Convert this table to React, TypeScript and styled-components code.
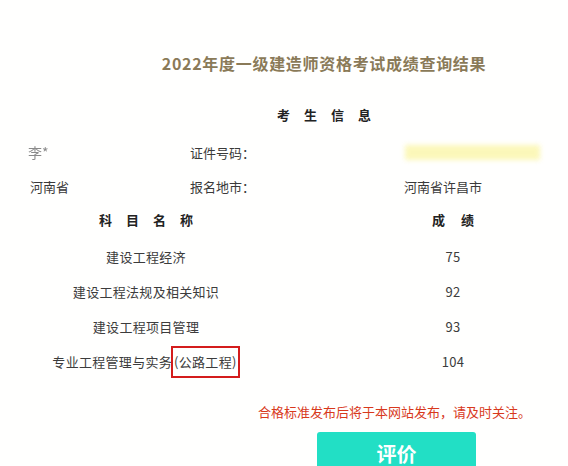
import React from "react";
import styled, { createGlobalStyle } from "styled-components";

const Global = createGlobalStyle`
  html, body { margin: 0; padding: 0; background: #ffffff; }
  body {
    font-family: "Noto Sans CJK SC", "Noto Sans", "Liberation Sans", sans-serif;
    font-size: 13px;
    color: #3a3a3a;
  }
`;

const Page = styled.div`
  width: 568px;
  height: 466px;
  overflow: hidden;
  padding-top: 53px;
  box-sizing: border-box;
  background: #fffffe;
`;

const Heading = styled.div`
  padding-left: 80px;
  display: flex;
  justify-content: center;
`;

const Title = styled.h1`
  margin: 0;
  font-size: 16px;
  line-height: 20px;
  font-weight: 700;
  color: #8a7a58;
  letter-spacing: 0.7px;
  white-space: nowrap;
`;

const SectionLabel = styled.div<{ $top?: number }>`
  margin-top: ${(p) => p.$top ?? 0}px;
  padding-left: 80px;
  display: flex;
  justify-content: center;
  font-weight: 700;
  line-height: 20px;
  color: #222;
  white-space: nowrap;
`;

const Spaced = styled.span<{ $gap: number }>`
  letter-spacing: ${(p) => p.$gap}px;
  margin-right: -${(p) => p.$gap}px;
  white-space: nowrap;
`;

const InfoGrid = styled.div`
  margin-top: 10px;
  padding-left: 30px;
  display: grid;
  grid-template-columns: 160px 214px 1fr;
  grid-auto-rows: 34px;
  align-items: center;
`;

const Masked = styled.span`
  color: #8a8a8a;
  font-size: 14px;
  filter: blur(0.7px);
  margin-left: -2px;
`;

const YellowMask = styled.span`
  display: block;
  width: 135px;
  height: 15px;
  margin-left: 1px;
  background: #fbf6a8;
  filter: blur(2.5px);
  opacity: 0.8;
`;

const ScoreGrid = styled.div`
  display: grid;
  grid-template-columns: 292px 214px;
  column-gap: 54px;
  justify-items: center;
  align-items: center;
`;

const HeadCell = styled.div`
  height: 34px;
  line-height: 34px;
  font-weight: 700;
  color: #222;
  margin-bottom: 2px;
  white-space: nowrap;
`;

const Cell = styled.div`
  height: 35px;
  line-height: 35px;
  color: #3c3c3c;
  white-space: nowrap;
  letter-spacing: 0.3px;
`;

const Highlight = styled.span`
  display: inline-block;
  border: 2px solid #d41c1c;
  padding: 7px 1px;
  margin-left: -1px;
  line-height: 14px;
  vertical-align: middle;
  position: relative;
  top: -1px;
`;

const Note = styled.div`
  margin-top: 23px;
  padding-left: 258px;
  color: #d8391c;
  font-size: 13px;
  line-height: 20px;
  white-space: nowrap;
`;

const ButtonRow = styled.div`
  margin-top: 10px;
  padding-left: 317px;
`;

const RateButton = styled.button`
  width: 159px;
  height: 44px;
  border: none;
  border-radius: 3px;
  background: #22dfc5;
  color: #ffffff;
  font-family: "Noto Sans CJK SC", sans-serif;
  font-size: 20px;
  font-weight: 700;
  padding: 0 0 2px;
  cursor: pointer;
`;

const scores: { name: React.ReactNode; score: string }[] = [
  { name: "建设工程经济", score: "75" },
  { name: "建设工程法规及相关知识", score: "92" },
  { name: "建设工程项目管理", score: "93" },
  {
    name: (
      <>
        专业工程管理与实务<Highlight>(公路工程)</Highlight>
      </>
    ),
    score: "104",
  },
];

export default function App() {
  return (
    <>
      <Global />
      <Page>
        <Heading>
          <Title>2022年度一级建造师资格考试成绩查询结果</Title>
        </Heading>
        <SectionLabel $top={32}>
          <Spaced $gap={14}>考生信息</Spaced>
        </SectionLabel>
        <InfoGrid>
          <Masked>李*</Masked>
          <span>证件号码：</span>
          <YellowMask />
          <span>河南省</span>
          <span>报名地市：</span>
          <span>河南省许昌市</span>
        </InfoGrid>
        <ScoreGrid>
          <HeadCell>
            <Spaced $gap={14}>科目名称</Spaced>
          </HeadCell>
          <HeadCell>
            <Spaced $gap={16}>成绩</Spaced>
          </HeadCell>
          {scores.map((s) => (
            <React.Fragment key={s.score}>
              <Cell>{s.name}</Cell>
              <Cell>{s.score}</Cell>
            </React.Fragment>
          ))}
        </ScoreGrid>
        <Note>合格标准发布后将于本网站发布，请及时关注。</Note>
        <ButtonRow>
          <RateButton>评价</RateButton>
        </ButtonRow>
      </Page>
    </>
  );
}
